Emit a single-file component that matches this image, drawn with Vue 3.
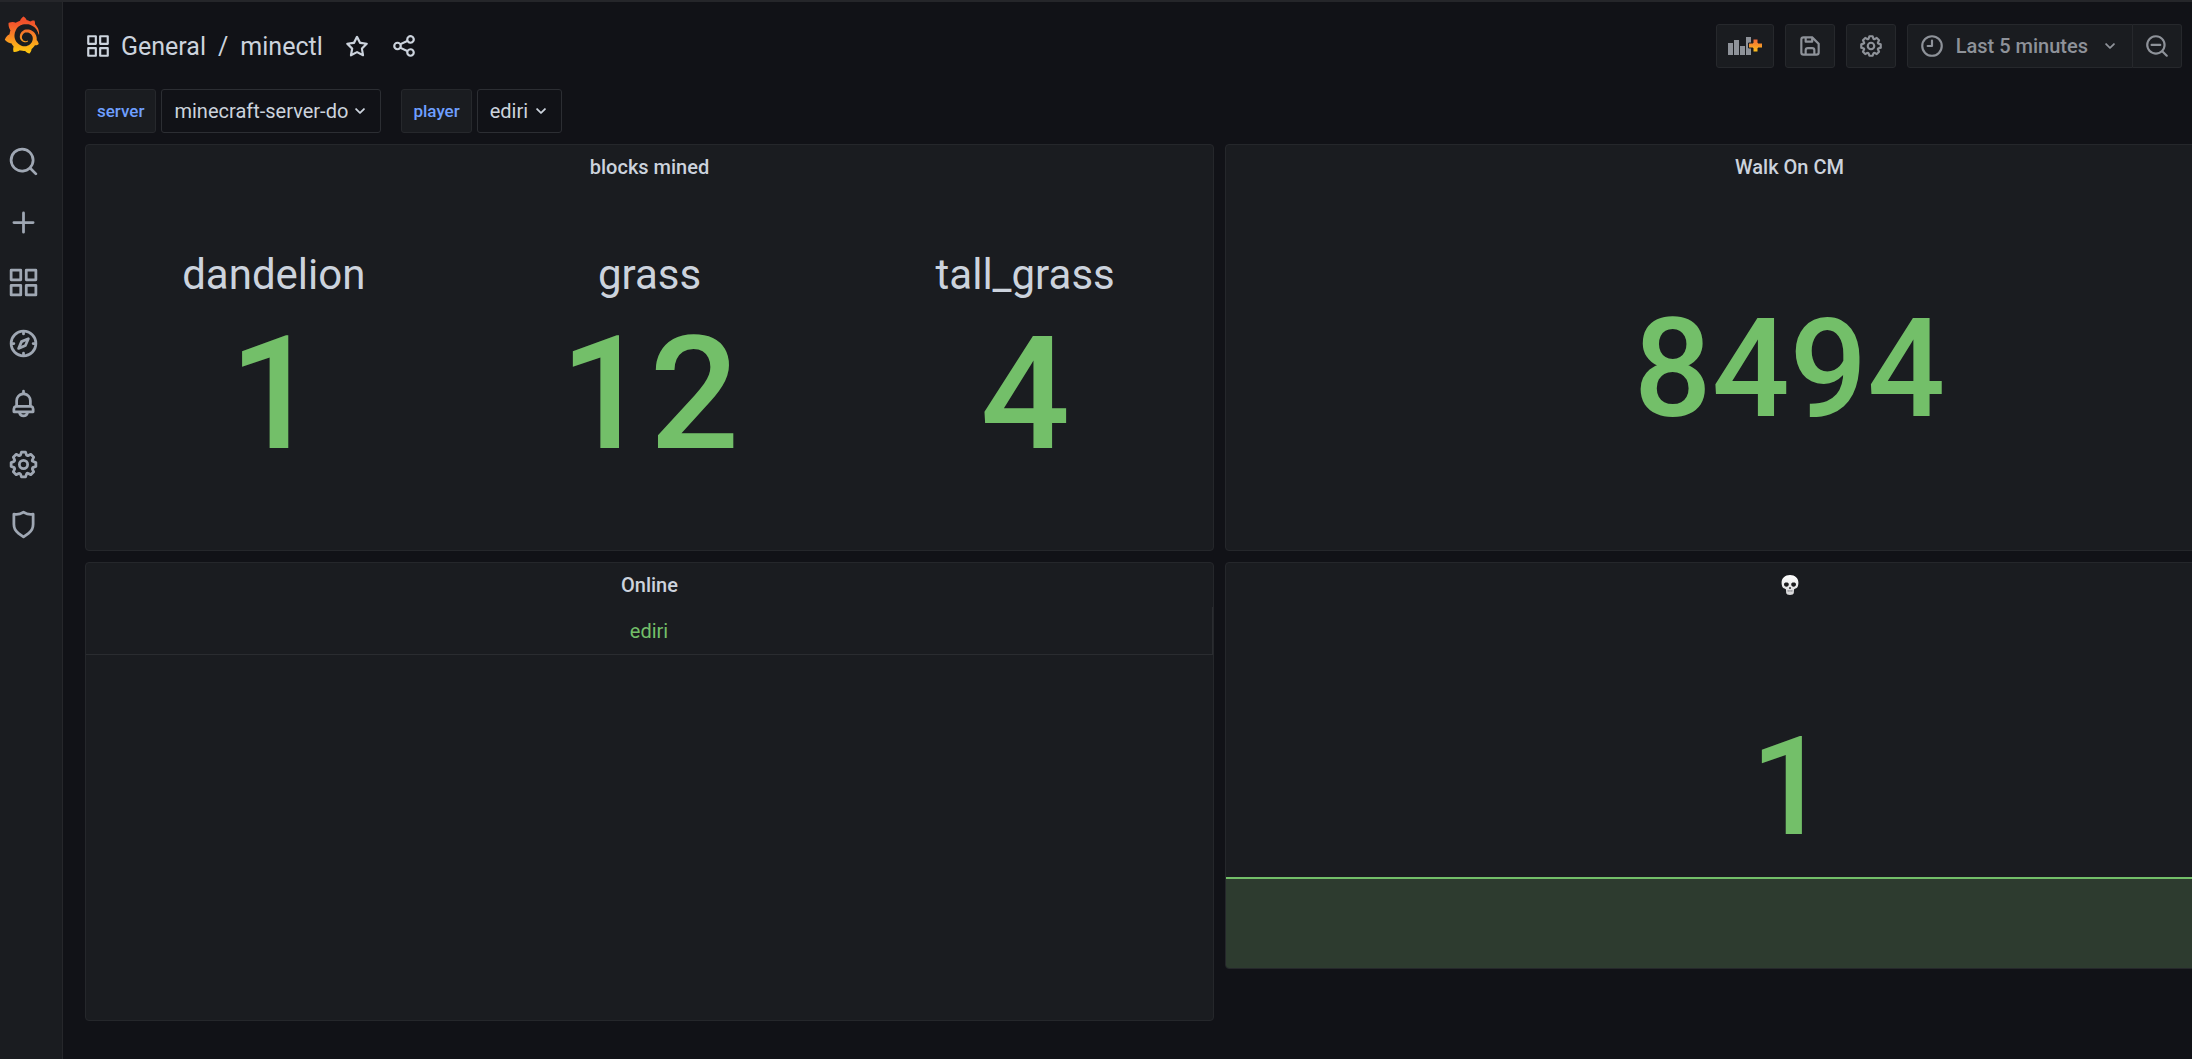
<script setup>
const icons = {
  apps: 'M10,13H3a1,1,0,0,0-1,1v7a1,1,0,0,0,1,1h7a1,1,0,0,0,1-1V14A1,1,0,0,0,10,13ZM9,20H4V15H9ZM21,2H14a1,1,0,0,0-1,1v7a1,1,0,0,0,1,1h7a1,1,0,0,0,1-1V3A1,1,0,0,0,21,2ZM20,9H15V4h5Zm1,4H14a1,1,0,0,0-1,1v7a1,1,0,0,0,1,1h7a1,1,0,0,0,1-1V14A1,1,0,0,0,21,13Zm-1,7H15V15h5ZM10,2H3A1,1,0,0,0,2,3v7a1,1,0,0,0,1,1h7a1,1,0,0,0,1-1V3A1,1,0,0,0,10,2ZM9,9H4V4H9Z',
  star: 'M22,9.67A1,1,0,0,0,21.14,9l-5.69-.83L12.9,3a1,1,0,0,0-1.8,0L8.55,8.16,2.86,9a1,1,0,0,0-.81.68,1,1,0,0,0,.25,1l4.13,4-1,5.68A1,1,0,0,0,6.9,21.44L12,18.77l5.1,2.67a.93.93,0,0,0,.46.12,1,1,0,0,0,.59-.19,1,1,0,0,0,.4-1l-1-5.68,4.13-4A1,1,0,0,0,22,9.67Zm-6.15,4a1,1,0,0,0-.29.88l.72,4.2-3.76-2a1.06,1.06,0,0,0-.94,0l-3.76,2,.72-4.2a1,1,0,0,0-.29-.88l-3-3,4.21-.61a1,1,0,0,0,.76-.55L12,5.7l1.88,3.82a1,1,0,0,0,.76.55l4.21.61Z',
  share: 'M18,14a4,4,0,0,0-3.08,1.48l-5.1-2.35a3.64,3.64,0,0,0,0-2.26l5.1-2.35A4,4,0,1,0,14,6a4.17,4.17,0,0,0,.07.71L8.79,9.14a4,4,0,1,0,0,5.72l5.28,2.43A4.17,4.17,0,0,0,14,18a4,4,0,1,0,4-4ZM18,4a2,2,0,1,1-2,2A2,2,0,0,1,18,4ZM6,14a2,2,0,1,1,2-2A2,2,0,0,1,6,14Zm12,6a2,2,0,1,1,2-2A2,2,0,0,1,18,20Z',
  search: 'M21.71,20.29,18,16.61A9,9,0,1,0,16.61,18l3.68,3.68a1,1,0,0,0,1.42,0A1,1,0,0,0,21.71,20.29ZM11,18a7,7,0,1,1,7-7A7,7,0,0,1,11,18Z',
  searchMinus: 'M21.71,20.29,18,16.61A9,9,0,1,0,16.61,18l3.68,3.68a1,1,0,0,0,1.42,0A1,1,0,0,0,21.71,20.29ZM11,18a7,7,0,1,1,7-7A7,7,0,0,1,11,18ZM15,10H7a1,1,0,0,0,0,2h8a1,1,0,0,0,0-2Z',
  plus: 'M19,11H13V5a1,1,0,0,0-2,0v6H5a1,1,0,0,0,0,2h6v6a1,1,0,0,0,2,0V13h6a1,1,0,0,0,0-2Z',
  compass: 'M12,2A10,10,0,1,0,22,12,10,10,0,0,0,12,2Zm1,17.93V19a1,1,0,0,0-2,0v.93A8,8,0,0,1,4.07,13H5a1,1,0,0,0,0-2H4.07A8,8,0,0,1,11,4.07V5a1,1,0,0,0,2,0V4.07A8,8,0,0,1,19.93,11H19a1,1,0,0,0,0,2h.93A8,8,0,0,1,13,19.93ZM15.14,7.55l-5,2.12a1,1,0,0,0-.52.52l-2.12,5a1,1,0,0,0,.21,1.1,1,1,0,0,0,.7.3.93.93,0,0,0,.4-.09l5-2.12a1,1,0,0,0,.52-.52l2.12-5a1,1,0,0,0-1.31-1.31Zm-2.49,5.1-2.28,1,1-2.28,2.28-1Z',
  bell: 'M18,13.18V10a6,6,0,0,0-5-5.91V3a1,1,0,0,0-2,0V4.09A6,6,0,0,0,6,10v3.18A3,3,0,0,0,4,16v2a1,1,0,0,0,1,1H8.14a4,4,0,0,0,7.72,0H19a1,1,0,0,0,1-1V16A3,3,0,0,0,18,13.18ZM8,10a4,4,0,0,1,8,0v3H8Zm4,10a2,2,0,0,1-1.72-1h3.44A2,2,0,0,1,12,20Zm6-3H6V16a1,1,0,0,1,1-1H17a1,1,0,0,1,1,1Z',
  cog: 'M21.32,9.55l-1.89-.63.89-1.78A1,1,0,0,0,20.13,6L18,3.87a1,1,0,0,0-1.15-.19l-1.78.89-.63-1.89A1,1,0,0,0,13.5,2h-3a1,1,0,0,0-.95.68L8.92,4.57,7.14,3.68A1,1,0,0,0,6,3.87L3.87,6a1,1,0,0,0-.19,1.15l.89,1.78-1.89.63A1,1,0,0,0,2,10.5v3a1,1,0,0,0,.68.95l1.89.63-.89,1.78A1,1,0,0,0,3.87,18L6,20.13a1,1,0,0,0,1.15.19l1.78-.89.63,1.89a1,1,0,0,0,.95.68h3a1,1,0,0,0,.95-.68l.63-1.89,1.78.89A1,1,0,0,0,18,20.13L20.13,18a1,1,0,0,0,.19-1.15l-.89-1.78,1.89-.63A1,1,0,0,0,22,13.5v-3A1,1,0,0,0,21.32,9.55ZM20,12.78l-1.2.4A2,2,0,0,0,17.64,16l.57,1.14-1.1,1.1L16,17.64a2,2,0,0,0-2.79,1.16l-.4,1.2H11.22l-.4-1.2A2,2,0,0,0,8,17.64l-1.14.57-1.1-1.1L6.36,16A2,2,0,0,0,5.2,13.18L4,12.78V11.22l1.2-.4A2,2,0,0,0,6.36,8L5.79,6.89l1.1-1.1L8,6.36A2,2,0,0,0,10.82,5.2l.4-1.2h1.56l.4,1.2A2,2,0,0,0,16,6.36l1.14-.57,1.1,1.1L17.64,8a2,2,0,0,0,1.16,2.79l1.2.4ZM12,8a4,4,0,1,0,4,4A4,4,0,0,0,12,8Zm0,6a2,2,0,1,1,2-2A2,2,0,0,1,12,14Z',
  shield: 'M19.63,3.65a1,1,0,0,0-.84-.2,8,8,0,0,1-6.22-1.27,1,1,0,0,0-1.14,0A8,8,0,0,1,5.21,3.45a1,1,0,0,0-.84.2A1,1,0,0,0,4,4.43v7.45a9,9,0,0,0,3.77,7.33l3.65,2.6a1,1,0,0,0,1.16,0l3.65-2.6A9,9,0,0,0,20,11.88V4.43A1,1,0,0,0,19.63,3.65ZM18,11.88a7,7,0,0,1-2.93,5.7L12,19.77,8.93,17.58A7,7,0,0,1,6,11.88V5.58a10,10,0,0,0,6-1.39,10,10,0,0,0,6,1.39Z',
  save: 'M20.71,9.29l-6-6a1,1,0,0,0-.32-.21A1.09,1.09,0,0,0,14,3H6A3,3,0,0,0,3,6V18a3,3,0,0,0,3,3H18a3,3,0,0,0,3-3V10A1,1,0,0,0,20.71,9.29ZM9,5h4V7H9Zm6,14H9V16a1,1,0,0,1,1-1h4a1,1,0,0,1,1,1Zm4-1a1,1,0,0,1-1,1H17V16a3,3,0,0,0-3-3H10a3,3,0,0,0-3,3v3H6a1,1,0,0,1-1-1V6A1,1,0,0,1,6,5H7V8A1,1,0,0,0,8,9h6a1,1,0,0,0,1-1V6.41l4,4Z',
  clock: 'M12,2A10,10,0,1,0,22,12,10,10,0,0,0,12,2Zm0,18a8,8,0,1,1,8-8A8,8,0,0,1,12,20ZM12,6a1,1,0,0,0-1,1v4H8a1,1,0,0,0,0,2h4a1,1,0,0,0,1-1V7A1,1,0,0,0,12,6Z',
  angle: 'M17,9.17a1,1,0,0,0-1.41,0L12,12.71,8.46,9.17a1,1,0,0,0-1.41,0,1,1,0,0,0,0,1.42l4.24,4.24a1,1,0,0,0,1.42,0L17,10.59A1,1,0,0,0,17,9.17Z',
}

const navItems = [
  { icon: 'search', label: 'Search' },
  { icon: 'plus', label: 'Create' },
  { icon: 'apps', label: 'Dashboards' },
  { icon: 'compass', label: 'Explore' },
  { icon: 'bell', label: 'Alerting' },
  { icon: 'cog', label: 'Configuration' },
  { icon: 'shield', label: 'Server admin' },
]

const variables = [
  { name: 'server', value: 'minecraft-server-do' },
  { name: 'player', value: 'ediri' },
]

const blocks = [
  { name: 'dandelion', count: 1 },
  { name: 'grass', count: 12 },
  { name: 'tall_grass', count: 4 },
]
</script>

<template>
  <div class="app">
    <aside class="sidebar">
      <a class="logo" href="#" aria-label="Home">
        <svg viewBox="0 0 351 365" width="36" height="38">
          <defs>
            <linearGradient id="flame" gradientUnits="userSpaceOnUse" x1="175" y1="365" x2="175" y2="0">
              <stop offset="0.05" stop-color="#fcc40f" />
              <stop offset="0.25" stop-color="#fba81b" />
              <stop offset="0.6" stop-color="#f5722a" />
              <stop offset="0.85" stop-color="#f1502b" />
            </linearGradient>
          </defs>
          <path fill="url(#flame)" d="M342,161.2c-0.6-6.1-1.6-13.1-3.6-20.9c-2-7.7-5-16.2-9.4-25c-4.4-8.8-10.1-17.9-17.5-26.8c-2.9-3.5-6.1-6.9-9.5-10.2c5.1-20.3-6.2-37.9-6.2-37.9c-19.5-1.2-31.9,6.1-36.5,9.4c-0.8-0.3-1.5-0.7-2.3-1c-3.3-1.3-6.7-2.6-10.3-3.7c-3.5-1.1-7.1-2.1-10.8-3c-3.7-0.9-7.4-1.6-11.2-2.2c-0.7-0.1-1.3-0.2-2-0.3c-8.5-27.2-32.9-38.6-32.9-38.6c-27.3,17.3-32.4,41.5-32.4,41.5s-0.1,0.5-0.3,1.4c-1.5,0.4-3,0.9-4.5,1.3c-2.1,0.6-4.2,1.4-6.2,2.2c-2.1,0.8-4.1,1.6-6.2,2.5c-4.1,1.8-8.2,3.8-12.2,6c-3.9,2.2-7.7,4.6-11.4,7.1c-0.5-0.2-1-0.4-1-0.4c-37.8-14.4-71.3,2.9-71.3,2.9c-3.1,40.2,15.1,65.5,18.7,70.1c-0.9,2.5-1.7,5-2.5,7.5c-2.8,9.1-4.9,18.4-6.2,28.1c-0.2,1.4-0.4,2.8-0.5,4.2C18.8,192.7,8.5,228,8.5,228c29.1,33.5,63.1,35.6,63.1,35.6c0,0,0.1-0.1,0.1-0.1c4.3,7.7,9.3,15,14.9,21.9c2.4,2.9,4.8,5.6,7.4,8.3c-10.6,30.4,1.5,55.6,1.5,55.6c32.4,1.2,53.7-14.2,58.2-17.7c3.2,1.1,6.5,2.1,9.8,2.9c10,2.6,20.2,4.1,30.4,4.5c2.5,0.1,5.1,0.2,7.6,0.1l1.2,0l0.8,0l1.6,0l1.6-0.1l0,0.1c15.3,21.8,42.1,24.9,42.1,24.9c19.1-20.1,20.2-40.1,20.2-44.4l0,0c0,0,0-0.1,0-0.3c0-0.4,0-0.6,0-0.6l0,0c0-0.3,0-0.6,0-0.9c4-2.8,7.8-5.8,11.4-9.1c7.6-6.9,14.3-14.8,19.9-23.3c0.5-0.8,1-1.6,1.5-2.4c21.6,1.2,36.9-13.4,36.9-13.4c-3.6-22.5-16.4-33.5-19.1-35.6l0,0c0,0-0.1-0.1-0.3-0.2c-0.2-0.1-0.2-0.2-0.2-0.2c0,0,0,0,0,0c-0.1-0.1-0.3-0.2-0.5-0.3c0.1-1.4,0.2-2.7,0.3-4.1c0.2-2.4,0.2-4.9,0.2-7.3l0-1.8l0-0.9l0-0.5c0-0.6,0-0.4,0-0.6l-0.1-1.5l-0.1-2c0-0.7-0.1-1.3-0.2-1.9c-0.1-0.6-0.1-1.3-0.2-1.9l-0.2-1.9l-0.3-1.9c-0.4-2.5-0.8-4.9-1.4-7.4c-2.3-9.7-6.1-18.9-11-27.2c-5-8.3-11.2-15.6-18.3-21.8c-7-6.2-14.9-11.2-23.1-14.9c-8.3-3.7-16.9-6.1-25.5-7.2c-4.3-0.6-8.6-0.8-12.9-0.7l-1.6,0l-0.4,0c-0.1,0-0.6,0-0.5,0l-0.7,0l-1.6,0.1c-0.6,0-1.2,0.1-1.7,0.1c-2.2,0.2-4.4,0.5-6.5,0.9c-8.6,1.6-16.7,4.7-23.8,9c-7.1,4.3-13.3,9.6-18.3,15.6c-5,6-8.9,12.7-11.6,19.6c-2.7,6.9-4.2,14.1-4.6,21c-0.1,1.7-0.1,3.5-0.1,5.2c0,0.4,0,0.9,0,1.3l0.1,1.4c0.1,0.8,0.1,1.7,0.2,2.5c0.3,3.5,1,6.9,1.9,10.1c1.9,6.5,4.9,12.4,8.6,17.4c3.7,5,8.2,9.1,12.9,12.4c4.7,3.2,9.8,5.5,14.8,7c5,1.5,10,2.1,14.7,2.1c0.6,0,1.2,0,1.7,0c0.3,0,0.6,0,0.9,0c0.3,0,0.6,0,0.9-0.1c0.5,0,1-0.1,1.5-0.1c0.1,0,0.3,0,0.4-0.1l0.5-0.1c0.3,0,0.6-0.1,0.9-0.1c0.6-0.1,1.1-0.2,1.7-0.3c0.6-0.1,1.1-0.2,1.6-0.4c1.1-0.2,2.1-0.6,3.1-0.9c2-0.7,4-1.5,5.7-2.4c1.8-0.9,3.4-2,5-3c0.4-0.3,0.9-0.6,1.3-1c1.6-1.3,1.9-3.7,0.6-5.3c-1.1-1.4-3.1-1.8-4.7-0.9c-0.4,0.2-0.8,0.4-1.2,0.6c-1.4,0.7-2.8,1.3-4.3,1.8c-1.5,0.5-3.1,0.9-4.7,1.2c-0.8,0.1-1.6,0.2-2.5,0.3c-0.4,0-0.8,0.1-1.3,0.1c-0.4,0-0.9,0-1.2,0c-0.4,0-0.8,0-1.2,0c-0.5,0-1,0-1.5-0.1c0,0-0.3,0-0.1,0l-0.2,0l-0.3,0c-0.2,0-0.5,0-0.7-0.1c-0.5-0.1-0.9-0.1-1.4-0.2c-3.7-0.5-7.4-1.6-10.9-3.2c-3.6-1.6-7-3.8-10.1-6.6c-3.1-2.8-5.8-6.1-7.9-9.9c-2.1-3.8-3.6-8-4.3-12.4c-0.3-2.2-0.5-4.5-0.4-6.7c0-0.6,0.1-1.2,0.1-1.8c0,0.2,0-0.1,0-0.1l0-0.2l0-0.5c0-0.3,0.1-0.6,0.1-0.9c0.1-1.2,0.3-2.4,0.5-3.6c1.7-9.6,6.5-19,13.9-26.1c1.9-1.8,3.9-3.4,6-4.9c2.1-1.5,4.4-2.8,6.8-3.9c2.4-1.1,4.8-2,7.4-2.7c2.5-0.7,5.1-1.1,7.8-1.4c1.3-0.1,2.6-0.2,4-0.2c0.4,0,0.6,0,0.9,0l1.1,0l0.7,0c0.3,0,0,0,0.1,0l0.3,0l1.1,0.1c2.9,0.2,5.7,0.6,8.5,1.3c5.6,1.2,11.1,3.3,16.2,6.1c10.2,5.7,18.9,14.5,24.2,25.1c2.7,5.3,4.6,11,5.5,16.9c0.2,1.5,0.4,3,0.5,4.5l0.1,1.1l0.1,1.1c0,0.4,0,0.8,0,1.1c0,0.4,0,0.8,0,1.1l0,1l0,1.1c0,0.7-0.1,1.9-0.1,2.6c-0.1,1.6-0.3,3.3-0.5,4.9c-0.2,1.6-0.5,3.2-0.8,4.8c-0.3,1.6-0.7,3.2-1.1,4.7c-0.8,3.1-1.8,6.2-3,9.3c-2.4,6-5.6,11.8-9.4,17.1c-7.7,10.6-18.2,19.2-30.2,24.7c-6,2.7-12.3,4.7-18.8,5.7c-3.2,0.6-6.5,0.9-9.8,1l-0.6,0l-0.5,0l-1.1,0l-1.6,0l-0.8,0c0.4,0-0.1,0-0.1,0l-0.3,0c-1.8,0-3.5-0.1-5.3-0.3c-7-0.5-13.9-1.8-20.7-3.7c-6.7-1.9-13.2-4.6-19.4-7.8c-12.3-6.6-23.4-15.6-32-26.5c-4.3-5.4-8.1-11.3-11.2-17.4c-3.1-6.1-5.6-12.6-7.4-19.1c-1.8-6.6-2.9-13.3-3.4-20.1l-0.1-1.3l0-0.3l0-0.3l0-0.6l0-1.1l0-0.3l0-0.4l0-0.8l0-1.6l0-0.3c0,0,0,0.1,0-0.1l0-0.6c0-0.8,0-1.7,0-2.5c0.1-3.3,0.4-6.8,0.8-10.2c0.4-3.4,1-6.9,1.7-10.3c0.7-3.4,1.5-6.8,2.5-10.2c1.9-6.7,4.3-13.2,7.1-19.3c5.7-12.2,13.1-23.1,22-31.8c2.2-2.2,4.5-4.2,6.9-6.2c2.4-1.9,4.9-3.7,7.5-5.4c2.5-1.7,5.2-3.2,7.9-4.6c1.3-0.7,2.7-1.4,4.1-2c0.7-0.3,1.4-0.6,2.1-0.9c0.7-0.3,1.4-0.6,2.1-0.9c2.8-1.2,5.7-2.2,8.7-3.1c0.7-0.2,1.5-0.4,2.2-0.7c0.7-0.2,1.5-0.4,2.2-0.6c1.5-0.4,3-0.8,4.5-1.1c0.7-0.2,1.5-0.3,2.3-0.5c0.8-0.2,1.5-0.3,2.3-0.5c0.8-0.1,1.5-0.3,2.3-0.4l1.1-0.2l1.2-0.2c0.8-0.1,1.5-0.2,2.3-0.3c0.9-0.1,1.7-0.2,2.6-0.3c0.7-0.1,1.9-0.2,2.6-0.3c0.5-0.1,1.1-0.1,1.6-0.2l1.1-0.1l0.5-0.1l0.6,0c0.9-0.1,1.7-0.1,2.6-0.2l1.3-0.1c0,0,0.5,0,0.1,0l0.3,0l0.6,0c0.7,0,1.5-0.1,2.2-0.1c2.9-0.1,5.9-0.1,8.8,0c5.8,0.2,11.5,0.9,17,1.9c11.1,2.1,21.5,5.6,31,10.3c9.5,4.6,17.9,10.3,25.3,16.5c0.5,0.4,0.9,0.8,1.4,1.2c0.4,0.4,0.9,0.8,1.3,1.2c0.9,0.8,1.7,1.6,2.6,2.4c0.9,0.8,1.7,1.6,2.5,2.4c0.8,0.8,1.6,1.6,2.4,2.5c3.1,3.3,6,6.6,8.6,10c5.2,6.7,9.4,13.5,12.7,19.9c0.2,0.4,0.4,0.8,0.6,1.2c0.2,0.4,0.4,0.8,0.6,1.2c0.4,0.8,0.8,1.6,1.1,2.4c0.4,0.8,0.7,1.5,1.1,2.3c0.3,0.8,0.7,1.5,1,2.3c1.2,3,2.4,5.9,3.3,8.6c1.5,4.4,2.6,8.3,3.5,11.7c0.3,1.4,1.6,2.3,3,2.1c1.5-0.1,2.6-1.3,2.6-2.8C342.6,170.4,342.5,166.1,342,161.2z" />
        </svg>
      </a>
      <nav class="nav" aria-label="Main">
        <a v-for="item in navItems" :key="item.icon" href="#" :aria-label="item.label">
          <svg class="icon icon-nav" viewBox="0 0 24 24"><path :d="icons[item.icon]" /></svg>
        </a>
      </nav>
    </aside>

    <main class="main">
      <header class="header">
        <div class="crumbs">
          <svg class="icon" viewBox="0 0 24 24"><path :d="icons.apps" /></svg>
          <h1 class="title">
            <a href="#">General</a><span class="slash">/</span><a href="#">minectl</a>
          </h1>
          <button class="plain" type="button" aria-label="Mark as favorite">
            <svg class="icon" viewBox="0 0 24 24"><path :d="icons.star" /></svg>
          </button>
          <button class="plain" type="button" aria-label="Share dashboard">
            <svg class="icon" viewBox="0 0 24 24"><path :d="icons.share" /></svg>
          </button>
        </div>

        <div class="tools">
          <button class="tool add" type="button" aria-label="Add panel">
            <svg class="icon-add" viewBox="0 0 36 20">
              <defs>
                <linearGradient id="spark" x1="0" y1="0" x2="0" y2="1">
                  <stop offset="0" stop-color="#f2653a" />
                  <stop offset="1" stop-color="#fbc31a" />
                </linearGradient>
              </defs>
              <path fill="currentColor" d="M1 7h5v12H1zM7 4h5v15H7zM13 10h5v9h-5zM19 1h5v18h-5z" />
              <path fill="url(#spark)" stroke="#1a1c20" stroke-width="1" d="M26 3h5v4h4.500v5H31v4h-5v-4h-4.500V7H26z" />
            </svg>
          </button>
          <button class="tool" type="button" aria-label="Save dashboard">
            <svg class="icon" viewBox="0 0 24 24"><path :d="icons.save" /></svg>
          </button>
          <button class="tool" type="button" aria-label="Dashboard settings">
            <svg class="icon" viewBox="0 0 24 24"><path :d="icons.cog" /></svg>
          </button>
          <div class="time-group">
            <button class="tool time" type="button">
              <svg class="icon" viewBox="0 0 24 24"><path :d="icons.clock" /></svg>
              <span>Last 5 minutes</span>
              <svg class="icon icon-small" viewBox="0 0 24 24"><path :d="icons.angle" /></svg>
            </button>
            <button class="tool zoom" type="button" aria-label="Zoom out time range">
              <svg class="icon" viewBox="0 0 24 24"><path :d="icons.searchMinus" /></svg>
            </button>
          </div>
        </div>
      </header>

      <section class="variables" aria-label="Variables">
        <div v-for="v in variables" :key="v.name" class="variable">
          <label class="var-label" :for="'var-' + v.name">{{ v.name }}</label>
          <div class="picker">
            <select :id="'var-' + v.name">
              <option>{{ v.value }}</option>
            </select>
            <svg class="icon icon-small" viewBox="0 0 24 24"><path :d="icons.angle" /></svg>
          </div>
        </div>
      </section>

      <div class="grid">
        <section class="panel">
          <h2 class="panel-title">blocks mined</h2>
          <div class="stats">
            <div v-for="b in blocks" :key="b.name" class="stat">
              <span class="stat-name">{{ b.name }}</span>
              <span class="stat-count">{{ b.count }}</span>
            </div>
          </div>
        </section>

        <section class="panel">
          <h2 class="panel-title">Walk On CM</h2>
          <div class="single">8494</div>
        </section>

        <section class="panel panel-tall">
          <h2 class="panel-title">Online</h2>
          <table class="table">
            <tbody>
              <tr><td>ediri</td></tr>
            </tbody>
          </table>
        </section>

        <section class="panel">
          <h2 class="panel-title" aria-label="Deaths">
            <svg class="skull" viewBox="0 0 18 20">
              <defs>
                <linearGradient id="bone" x1="0" y1="0" x2="0" y2="1">
                  <stop offset="0" stop-color="#ffffff" />
                  <stop offset="1" stop-color="#d6d6d8" />
                </linearGradient>
              </defs>
              <path fill="url(#bone)" d="M9 0C4 0 .6 3.200.6 7.600c0 2 .3 3.400 1 4.700.5.900 1.600 1.300 2.800 1.600.6.200.7.700.6 1.400l.2 2.600c.1 1.300 1.700 2 3.800 2s3.700-.7 3.800-2l.2-2.600c-.1-.7 0-1.200.6-1.400 1.200-.3 2.300-.7 2.800-1.600.7-1.300 1-2.700 1-4.700C17.400 3.200 14 0 9 0z" />
              <path fill="#1b1b1d" d="M3 9.300c0-1.300.9-1.900 2.400-1.900s2.400.6 2.400 1.900-.9 2.500-2.400 2.500S3 10.700 3 9.300zM10.200 9.300c0-1.300.9-1.900 2.400-1.900s2.400.6 2.400 1.900-.9 2.500-2.400 2.500-2.400-1.100-2.400-2.500zM9 11.800c.6.500 1 1.100 1 1.600s-.6.500-1 .3c-.4.200-1 .2-1-.3s.4-1.100 1-1.600z" />
              <path fill="none" stroke="#8c8c90" stroke-width=".7" d="M5.800 15.900h6.400M7.500 15.300v1.300M9 15.300v1.300M10.500 15.300v1.300" />
            </svg>
          </h2>
          <div class="single">1</div>
          <div class="area"></div>
        </section>
      </div>
    </main>
  </div>
</template>

<style>
body {
  background: #111217;
  overflow: hidden;
}
</style>

<style scoped>
.app {
  display: flex;
  box-sizing: border-box;
  min-height: 100vh;
  border-top: 2px solid #25262a;
  background: #111217;
  color: #ccd3dd;
  font-family: Roboto, "Liberation Sans", sans-serif;
  font-size: 20px;
}

a {
  color: inherit;
  text-decoration: none;
}

button,
select {
  margin: 0;
  font: inherit;
  color: inherit;
}

.icon {
  display: block;
  flex: none;
  width: 26px;
  height: 26px;
  fill: currentColor;
}

.icon-nav {
  width: 33px;
  height: 33px;
}

.icon-small {
  width: 22px;
  height: 22px;
}

.sidebar {
  box-sizing: border-box;
  flex: none;
  width: 63px;
  padding: 14px 0 0 4px;
  border-right: 1px solid #26272b;
  background: #1a1c20;
  color: #9fa7b3;
}

.logo {
  display: block;
  height: 38px;
}

.logo svg {
  display: block;
}

.nav {
  display: flex;
  flex-direction: column;
  justify-content: space-between;
  height: 396px;
  margin-top: 91px;
  padding-left: 3px;
}

.main {
  flex: 1;
  min-width: 0;
  padding-left: 22px;
  overflow: hidden;
}

.header {
  display: flex;
  justify-content: space-between;
  padding: 22px 10px 21px 0;
}

.crumbs {
  display: flex;
  align-items: center;
  height: 44px;
}

.title {
  margin: 0 21px 0 10px;
  font-size: 25px;
  font-weight: 400;
}

.slash {
  margin: 0 12px;
}

.plain {
  padding: 0;
  border: 0;
  background: none;
}

.plain + .plain {
  margin-left: 21px;
}

.tools {
  display: flex;
  gap: 11px;
  color: #8e9299;
}

.tool {
  display: flex;
  align-items: center;
  justify-content: center;
  box-sizing: border-box;
  height: 44px;
  padding: 0 11px;
  border: 1px solid #26282c;
  border-radius: 3px;
  background: #1a1c20;
}

.add {
  padding: 0 10px;
}

.icon-add {
  display: block;
  width: 36px;
  height: 20px;
}

.time-group {
  display: flex;
}

.time {
  gap: 11px;
  border-radius: 3px 0 0 3px;
  font-weight: 500;
}

.zoom {
  border-left: 0;
  border-radius: 0 3px 3px 0;
}

.variables {
  display: flex;
  gap: 20px;
  margin-bottom: 11px;
}

.variable {
  display: flex;
  gap: 5px;
}

.var-label {
  box-sizing: border-box;
  height: 44px;
  padding: 0 11px;
  border: 1px solid #26282c;
  border-radius: 3px;
  background: #1a1c20;
  color: #6e9fff;
  font-size: 17px;
  font-weight: 500;
  line-height: 42px;
}

.picker {
  display: grid;
  align-items: center;
}

.picker select {
  grid-area: 1 / 1;
  appearance: none;
  box-sizing: border-box;
  height: 44px;
  padding: 0 32px 0 12px;
  border: 1px solid #2c2e33;
  border-radius: 3px;
  background: #111217;
}

.picker .icon {
  grid-area: 1 / 1;
  justify-self: end;
  margin-right: 10px;
  pointer-events: none;
}

.grid {
  display: grid;
  grid-template-columns: 1fr 1fr;
  align-items: start;
  gap: 11px;
  margin-right: -162px;
}

.panel {
  position: relative;
  display: flex;
  flex-direction: column;
  box-sizing: border-box;
  min-height: 407px;
  border: 1px solid #25272b;
  border-radius: 4px;
  background: #1a1c20;
  overflow: hidden;
}

.panel-tall {
  min-height: 459px;
}

.panel-title {
  display: flex;
  align-items: center;
  justify-content: center;
  height: 44px;
  margin: 0;
  font-size: 20px;
  font-weight: 500;
}

.skull {
  width: 18px;
  height: 20px;
}

.stats {
  display: grid;
  flex: 1;
  grid-template-columns: repeat(3, 1fr);
  align-items: center;
  padding-bottom: 14px;
}

.stat {
  display: flex;
  flex-direction: column;
  align-items: center;
  gap: 11px;
}

.stat-name {
  font-size: 42px;
  line-height: 52px;
}

.stat-count {
  color: #73bf69;
  font-size: 158px;
  font-weight: 500;
  line-height: 164px;
}

.single {
  display: flex;
  flex: 1;
  align-items: center;
  justify-content: center;
  color: #73bf69;
  font-size: 137px;
  font-weight: 500;
  line-height: 137px;
}

.table {
  width: 100%;
  border-collapse: collapse;
}

.table td {
  height: 47px;
  padding: 0;
  border-right: 1px solid #2a2c30;
  border-bottom: 1px solid #2a2c30;
  color: #73bf69;
  font-size: 20px;
  text-align: center;
}

.area {
  position: absolute;
  right: 0;
  bottom: 0;
  left: 0;
  box-sizing: border-box;
  height: 91px;
  border-top: 2px solid #73bf69;
  background: #2d3b2f;
}
</style>
